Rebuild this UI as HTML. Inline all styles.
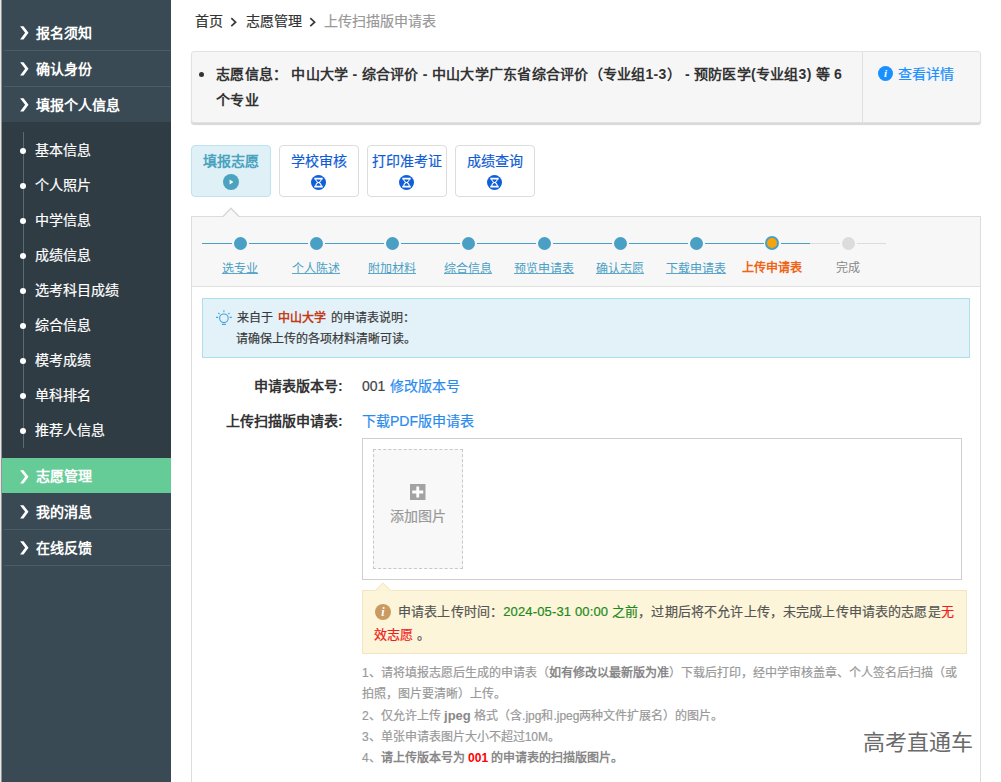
<!DOCTYPE html>
<html lang="zh-CN"><head><meta charset="utf-8">
<style>
*{box-sizing:border-box;margin:0;padding:0}
html,body{width:1001px;height:782px;overflow:hidden;background:#fff;font-family:"Liberation Sans",sans-serif;font-size:14px;color:#333}
body{-webkit-text-stroke-width:0.2px}
b,.bd,.sl{-webkit-text-stroke-width:0}
.abs{position:absolute}
#side{position:absolute;left:0;top:0;width:171px;height:782px;background:#3a4a54}
#side .edge{position:absolute;left:0;top:0;width:2px;height:782px;background:linear-gradient(90deg,#ebe7e5 0,#ebe7e5 1px,#8f979b 1px)}
.mi{-webkit-text-stroke-width:0;position:absolute;left:2px;width:169px;height:36px;color:#fff;font-weight:bold;font-size:14px;line-height:36px;padding-left:34px;padding-top:1px}
.mi .sep{position:absolute;left:2px;right:0;bottom:-1px;height:1px;background:#4c5c66}
.chev{position:absolute;left:18px;top:12px;width:9px;height:14px}
#sub{position:absolute;left:2px;top:122px;width:169px;height:336px;background:#2f3c44}
#sub .vl{position:absolute;left:21px;top:10px;width:1px;height:316px;background:#5d6a72}
.si{position:absolute;left:0;width:169px;height:35px;line-height:35px;color:#fff;font-size:14px;padding-left:33px}
.si:before{content:"";position:absolute;left:18px;top:14.5px;width:6px;height:6px;border-radius:50%;background:#fff}
</style></head><body>
<div id="side">
  <div class="edge"></div>
  <div class="mi" style="top:14px"><svg class="chev" viewBox="0 0 9 14"><path d="M0.1 0.2 H3.5 L8.5 6.8 L3.5 13.4 H0.1 L5.1 6.8Z" fill="#fff"/></svg>报名须知<div class="sep"></div></div>
  <div class="mi" style="top:50px"><svg class="chev" viewBox="0 0 9 14"><path d="M0.1 0.2 H3.5 L8.5 6.8 L3.5 13.4 H0.1 L5.1 6.8Z" fill="#fff"/></svg>确认身份<div class="sep"></div></div>
  <div class="mi" style="top:86px"><svg class="chev" viewBox="0 0 9 14"><path d="M0.1 0.2 H3.5 L8.5 6.8 L3.5 13.4 H0.1 L5.1 6.8Z" fill="#fff"/></svg>填报个人信息</div>
  <div id="sub">
    <div class="vl"></div>
    <div class="si" style="top:11px">基本信息</div>
    <div class="si" style="top:46px">个人照片</div>
    <div class="si" style="top:81px">中学信息</div>
    <div class="si" style="top:116px">成绩信息</div>
    <div class="si" style="top:151px">选考科目成绩</div>
    <div class="si" style="top:186px">综合信息</div>
    <div class="si" style="top:221px">模考成绩</div>
    <div class="si" style="top:256px">单科排名</div>
    <div class="si" style="top:291px">推荐人信息</div>
  </div>
  <div class="mi" style="top:458px;background:#66cc97;height:35px;line-height:35px"><svg class="chev" viewBox="0 0 9 14"><path d="M0.1 0.2 H3.5 L8.5 6.8 L3.5 13.4 H0.1 L5.1 6.8Z" fill="#fff"/></svg>志愿管理</div>
  <div class="mi" style="top:493px"><svg class="chev" viewBox="0 0 9 14"><path d="M0.1 0.2 H3.5 L8.5 6.8 L3.5 13.4 H0.1 L5.1 6.8Z" fill="#fff"/></svg>我的消息<div class="sep"></div></div>
  <div class="mi" style="top:529px"><svg class="chev" viewBox="0 0 9 14"><path d="M0.1 0.2 H3.5 L8.5 6.8 L3.5 13.4 H0.1 L5.1 6.8Z" fill="#fff"/></svg>在线反馈<div class="sep"></div></div>
</div>

<!-- breadcrumb -->
<div class="abs" style="left:195px;top:11px;line-height:20px;color:#333">首页</div>
<svg class="abs" style="left:229px;top:17px" width="10" height="11"><path d="M2.3 1.2 L6.6 5.2 L2.3 9.2" stroke="#3a3a3a" stroke-width="1.7" fill="none"/></svg>
<div class="abs" style="left:246px;top:11px;line-height:20px;color:#333">志愿管理</div>
<svg class="abs" style="left:308px;top:17px" width="10" height="11"><path d="M2.3 1.2 L6.6 5.2 L2.3 9.2" stroke="#3a3a3a" stroke-width="1.7" fill="none"/></svg>
<div class="abs" style="left:324px;top:11px;line-height:20px;color:#999">上传扫描版申请表</div>

<!-- info box -->
<div class="abs" style="left:191px;top:51px;width:790px;height:72px;background:#f6f6f6;border:1px solid #e2e2e2;border-radius:3px;box-shadow:0 2px 1px #d8d8d8"></div>
<div class="abs" style="left:862px;top:52px;width:1px;height:70px;background:#e0e0e0"></div>
<div class="bd abs" style="left:216px;top:61px;width:660px;font-weight:bold;font-size:14px;line-height:26px;color:#333;letter-spacing:0.25px;white-space:nowrap">志愿信息：&nbsp;中山大学 - 综合评价 - 中山大学广东省综合评价（专业组1-3） - 预防医学(专业组3) 等 6<br>个专业</div>
<div class="abs" style="left:199px;top:72px;width:5px;height:5px;border-radius:50%;background:#333"></div>
<div class="bd abs" style="left:878px;top:66px;width:15px;height:15px;border-radius:50%;background:#1890ff;color:#fff;font:bold italic 11px/15px 'Liberation Serif',serif;text-align:center">i</div>
<div class="abs" style="left:898px;top:64px;font-size:14px;line-height:20px;color:#1890ff">查看详情</div>

<!-- tabs -->
<div class="abs" style="left:191px;top:145px;width:80px;height:52px;background:#dff0f7;border:1px solid #bde3ee;border-radius:4px"></div>
<div class="bd abs" style="left:191px;top:151px;width:80px;text-align:center;font-weight:bold;color:#4ba3bf;line-height:20px">填报志愿</div>
<div class="abs" style="left:223px;top:174px;width:16px;height:16px;border-radius:50%;background:#4ba3bf"><svg width="16" height="16" style="position:absolute;left:0;top:0"><path d="M6.6 5.6 L10.4 8 L6.6 10.4Z" fill="#fff"/></svg></div>

<div class="abs" style="left:279px;top:145px;width:80px;height:52px;background:#fff;border:1px solid #dcdcdc;border-radius:4px"></div>
<div class="abs" style="left:279px;top:151px;width:80px;text-align:center;color:#0f5cd6;line-height:20px">学校审核</div>
<div class="abs" style="left:367px;top:145px;width:80px;height:52px;background:#fff;border:1px solid #dcdcdc;border-radius:4px"></div>
<div class="abs" style="left:367px;top:151px;width:80px;text-align:center;color:#0f5cd6;line-height:20px">打印准考证</div>
<div class="abs" style="left:455px;top:145px;width:80px;height:52px;background:#fff;border:1px solid #dcdcdc;border-radius:4px"></div>
<div class="abs" style="left:455px;top:151px;width:80px;text-align:center;color:#0f5cd6;line-height:20px">成绩查询</div>

<svg class="abs" style="left:311px;top:175px" width="15" height="15" viewBox="0 0 15 15"><circle cx="7.5" cy="7.5" r="7.5" fill="#0f5fd9"/><g stroke="#fff" fill="none"><path d="M3.3 3.6 H11.7 M3.3 11.6 H11.7" stroke-width="1.6"/><path d="M4.6 4 Q5 6.5 7 7.6 Q5 8.7 4.6 11.2 M10.4 4 Q10 6.5 8 7.6 Q10 8.7 10.4 11.2" stroke-width="1.1"/></g></svg>
<svg class="abs" style="left:399px;top:175px" width="15" height="15" viewBox="0 0 15 15"><circle cx="7.5" cy="7.5" r="7.5" fill="#0f5fd9"/><g stroke="#fff" fill="none"><path d="M3.3 3.6 H11.7 M3.3 11.6 H11.7" stroke-width="1.6"/><path d="M4.6 4 Q5 6.5 7 7.6 Q5 8.7 4.6 11.2 M10.4 4 Q10 6.5 8 7.6 Q10 8.7 10.4 11.2" stroke-width="1.1"/></g></svg>
<svg class="abs" style="left:487px;top:175px" width="15" height="15" viewBox="0 0 15 15"><circle cx="7.5" cy="7.5" r="7.5" fill="#0f5fd9"/><g stroke="#fff" fill="none"><path d="M3.3 3.6 H11.7 M3.3 11.6 H11.7" stroke-width="1.6"/><path d="M4.6 4 Q5 6.5 7 7.6 Q5 8.7 4.6 11.2 M10.4 4 Q10 6.5 8 7.6 Q10 8.7 10.4 11.2" stroke-width="1.1"/></g></svg>
<!-- steps panel -->
<div class="abs" style="left:191px;top:216px;width:790px;height:600px;border:1px solid #dcdcdc;background:#fff"></div>
<div class="abs" style="left:192px;top:217px;width:788px;height:70px;background:#f7f7f7;border-bottom:1px solid #e0e0e0"></div>


<!-- caret -->
<svg class="abs" style="left:222px;top:207px" width="18" height="11"><path d="M0.5 10 L9 1.2 L17.5 10" fill="#f7f7f7" stroke="#d6d6d6" stroke-width="1.3"/><rect x="0" y="10" width="18" height="1" fill="#f7f7f7"/></svg>

<!-- steps -->
<div class="abs" style="left:202px;top:243px;width:608px;height:1px;background:#4a9fc4"></div>
<div class="abs" style="left:810px;top:243px;width:76px;height:1px;background:#dcdcdc"></div>
<div class="abs" style="left:232px;top:235px;width:17px;height:17px;border-radius:50%;background:#4a9fc4;border:2px solid #f7f7f7"></div>
<div class="abs" style="left:308px;top:235px;width:17px;height:17px;border-radius:50%;background:#4a9fc4;border:2px solid #f7f7f7"></div>
<div class="abs" style="left:384px;top:235px;width:17px;height:17px;border-radius:50%;background:#4a9fc4;border:2px solid #f7f7f7"></div>
<div class="abs" style="left:460px;top:235px;width:17px;height:17px;border-radius:50%;background:#4a9fc4;border:2px solid #f7f7f7"></div>
<div class="abs" style="left:536px;top:235px;width:17px;height:17px;border-radius:50%;background:#4a9fc4;border:2px solid #f7f7f7"></div>
<div class="abs" style="left:612px;top:235px;width:17px;height:17px;border-radius:50%;background:#4a9fc4;border:2px solid #f7f7f7"></div>
<div class="abs" style="left:688px;top:235px;width:17px;height:17px;border-radius:50%;background:#4a9fc4;border:2px solid #f7f7f7"></div>
<div class="abs" style="left:764px;top:235px;width:17px;height:17px;border-radius:50%;background:#f7f7f7"></div><div class="abs" style="left:765px;top:236px;width:14px;height:14px;border-radius:50%;background:#f7a40c;border:2px solid #4a9fc4"></div>
<div class="abs" style="left:840px;top:235px;width:17px;height:17px;border-radius:50%;background:#dcdcdc;border:2px solid #f7f7f7"></div>


<div class="abs sl" style="left:190px;top:259px;width:100px;text-align:center;font-size:12px;line-height:20px;color:#4a9fc4">选专业</div>
<div class="abs" style="left:222.0px;top:273px;width:36px;height:1px;background:#5aa6c8"></div>
<div class="abs sl" style="left:266px;top:259px;width:100px;text-align:center;font-size:12px;line-height:20px;color:#4a9fc4">个人陈述</div>
<div class="abs" style="left:292.0px;top:273px;width:48px;height:1px;background:#5aa6c8"></div>
<div class="abs sl" style="left:342px;top:259px;width:100px;text-align:center;font-size:12px;line-height:20px;color:#4a9fc4">附加材料</div>
<div class="abs" style="left:368.0px;top:273px;width:48px;height:1px;background:#5aa6c8"></div>
<div class="abs sl" style="left:418px;top:259px;width:100px;text-align:center;font-size:12px;line-height:20px;color:#4a9fc4">综合信息</div>
<div class="abs" style="left:444.0px;top:273px;width:48px;height:1px;background:#5aa6c8"></div>
<div class="abs sl" style="left:494px;top:259px;width:100px;text-align:center;font-size:12px;line-height:20px;color:#4a9fc4">预览申请表</div>
<div class="abs" style="left:514.0px;top:273px;width:60px;height:1px;background:#5aa6c8"></div>
<div class="abs sl" style="left:570px;top:259px;width:100px;text-align:center;font-size:12px;line-height:20px;color:#4a9fc4">确认志愿</div>
<div class="abs" style="left:596.0px;top:273px;width:48px;height:1px;background:#5aa6c8"></div>
<div class="abs sl" style="left:646px;top:259px;width:100px;text-align:center;font-size:12px;line-height:20px;color:#4a9fc4">下载申请表</div>
<div class="abs" style="left:666.0px;top:273px;width:60px;height:1px;background:#5aa6c8"></div>
<div class="abs bd" style="left:722px;top:258px;width:100px;text-align:center;font-size:12px;line-height:20px;color:#f06418;font-weight:bold">上传申请表</div>
<div class="abs sl" style="left:798px;top:258px;width:100px;text-align:center;font-size:12px;line-height:20px;color:#888">完成</div>

<!-- alert -->
<div class="abs" style="left:202px;top:298px;width:768px;height:60px;background:#e3f1f8;border:1px solid #aedfe8"></div>
<svg class="abs" style="left:214px;top:309px" width="20" height="18" viewBox="0 0 20 18"><g stroke="#48a6de" fill="none" stroke-width="1.1"><circle cx="9.9" cy="9.3" r="4.3"/><path d="M7.9 15.4 h4 M9.9 1.3 v2 M2 8.4 h2.2 M15.6 8.4 h2.2 M4.3 4 l1.3 1.2 M15.5 4 l-1.3 1.2"/></g></svg>
<div class="abs" style="left:237px;top:308px;font-size:12px;line-height:20.5px;color:#3a3a3a;word-spacing:1.5px">来自于 <b style="color:#c63a1a;font-size:12px">中山大学</b> 的申请表说明：<br><span style="margin-left:-1px">请确保上传的各项材料清晰可读。</span></div>

<!-- form -->
<div class="bd abs" style="left:200px;top:376px;width:138px;text-align:right;font-weight:bold;line-height:20px;color:#333">申请表版本号</div>
<div class="bd abs" style="left:338px;top:376px;font-weight:bold;line-height:20px;color:#333">:</div>
<div class="abs" style="left:362px;top:376px;line-height:20px;color:#444;word-spacing:1px">001 <span style="color:#2a8bef">修改版本号</span></div>
<div class="bd abs" style="left:200px;top:411px;width:138px;text-align:right;font-weight:bold;line-height:20px;color:#333">上传扫描版申请表</div>
<div class="bd abs" style="left:338px;top:411px;font-weight:bold;line-height:20px;color:#333">:</div>
<div class="abs" style="left:362px;top:411px;line-height:20px;color:#2a8bef">下载PDF版申请表</div>

<!-- upload -->
<div class="abs" style="left:362px;top:438px;width:600px;height:142px;border:1px solid #cfcfcf;background:#fff"></div>
<div class="abs" style="left:373px;top:449px;width:90px;height:120px;border:1px dashed #c8c8c8;background:#f8f8f8"></div>
<svg class="abs" style="left:410px;top:484px" width="16" height="16"><rect width="15.5" height="16" fill="#a3a3a3"/><path d="M7.75 2.5 v11 M2.25 8 h11" stroke="#fff" stroke-width="2.8"/></svg>
<div class="abs" style="left:373px;top:506px;width:90px;text-align:center;color:#999;line-height:20px">添加图片</div>

<!-- warning -->
<div class="abs" style="left:362px;top:590px;width:605px;height:64px;background:#fdf5d9;border:1px solid #f3e4c2"></div>
<svg class="abs" style="left:375px;top:582px" width="16" height="10"><path d="M0.3 8.6 L8 1.2 L15.7 8.6" fill="#fdf5d9" stroke="#f3e4c2" stroke-width="1.1"/><rect x="0" y="8.5" width="16" height="1.5" fill="#fdf5d9"/></svg>
<div class="bd abs" style="left:375px;top:604px;width:16px;height:16px;border-radius:50%;background:#c99a62;color:#fff;font:bold italic 12px/16px 'Liberation Serif',serif;text-align:center">i</div>
<div class="abs" style="left:374px;top:601px;width:600px;font-size:13px;line-height:22.5px;color:#555;letter-spacing:0.15px;white-space:nowrap"><span style="margin-left:24px"></span>申请表上传时间：<span style="color:#1b8a1b">2024-05-31 00:00 之前</span>，过期后将不允许上传，未完成上传申请表的志愿是<span style="color:#f01c1c">无<br>效志愿</span> 。</div>

<!-- notes -->
<div class="abs" style="left:362px;top:663px;width:620px;font-size:12px;line-height:21px;color:#999;white-space:nowrap">1、请将填报志愿后生成的申请表（<b style="color:#888">如有修改以最新版为准</b>）下载后打印，经中学审核盖章、个人签名后扫描（或<br>拍照，图片要清晰）上传。<br>2、仅允许上传 <b style="color:#888;font-size:13px">jpeg</b> 格式（含.jpg和.jpeg两种文件扩展名）的图片。<br>3、单张申请表图片大小不超过10M。<br>4、<b style="color:#888">请上传版本号为 <span style="color:#f00">001</span> 的申请表的扫描版图片。</b></div>

<!-- watermark -->
<div class="abs" style="left:863px;top:730px;font-size:22px;line-height:26px;color:#6a6a6a;-webkit-text-stroke-width:0">高考直通车</div>
</body></html>
